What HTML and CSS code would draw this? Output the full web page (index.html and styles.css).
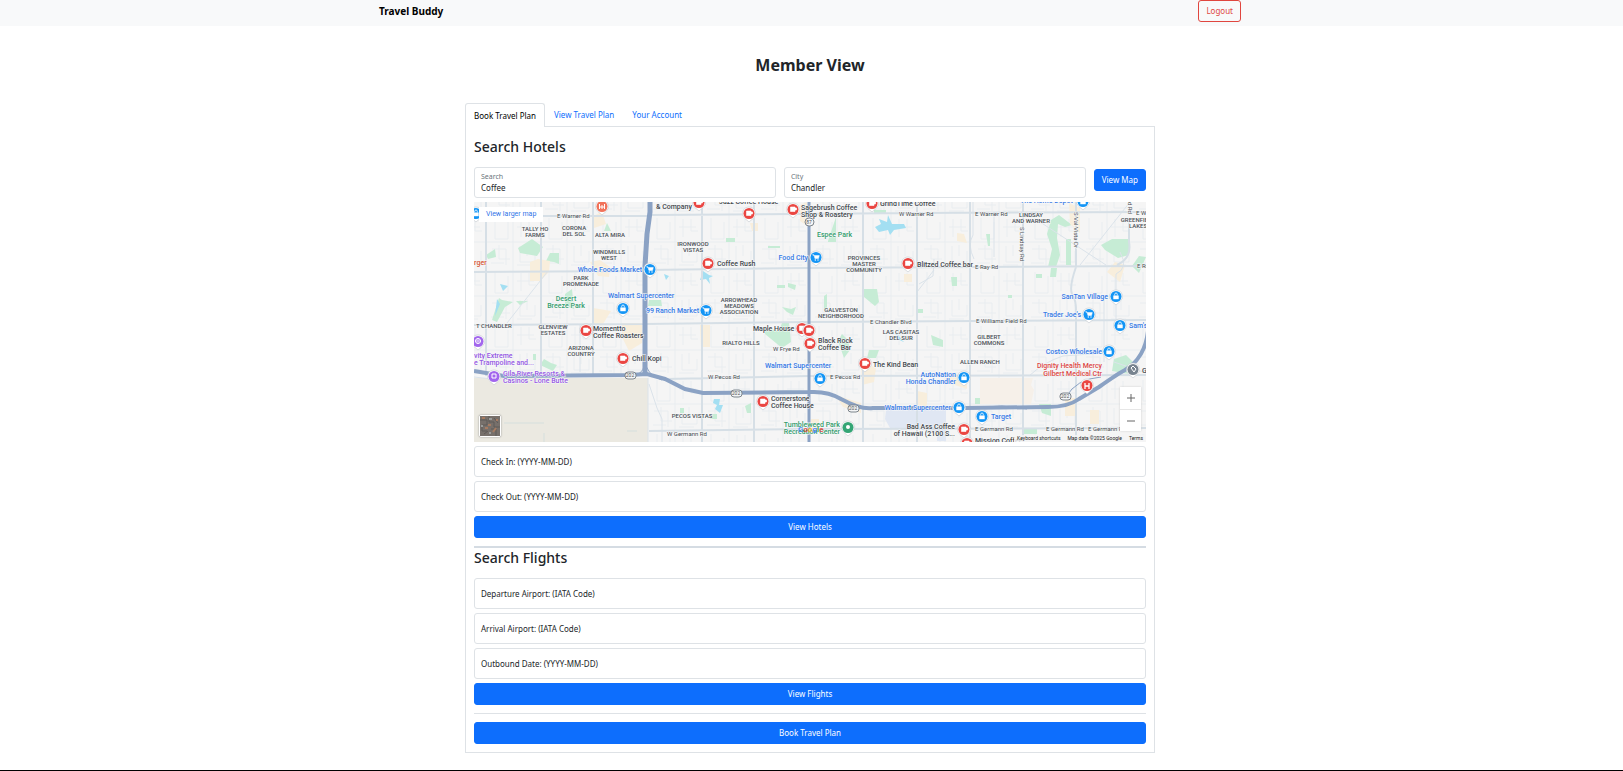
FILE: index.html
```html
<!DOCTYPE html>
<html lang="en">
<head>
<meta charset="utf-8">
<title>Travel Buddy</title>
<link rel="stylesheet" href="styles.css">
</head>
<body>
<nav class="navbar">
  <div class="navbar-inner">
    <a class="brand" href="#">Travel Buddy</a>
    <button class="btn btn-danger" type="button">Logout</button>
  </div>
</nav>
<main class="main">
  <h1 class="title">Member View</h1>
  <div class="tabs" role="tablist">
    <button class="tab tab-active" type="button" role="tab" aria-selected="true">Book Travel Plan</button>
    <button class="tab" type="button" role="tab" aria-selected="false">View Travel Plan</button>
    <button class="tab" type="button" role="tab" aria-selected="false">Your Account</button>
  </div>
  <section class="panel">
    <h2 class="heading">Search Hotels</h2>
    <form class="stack">
      <div class="search-row">
        <div class="field field-filled">
          <label for="search">Search</label>
          <input id="search" type="text" value="Coffee">
        </div>
        <div class="field field-filled">
          <label for="city">City</label>
          <input id="city" type="text" value="Chandler">
        </div>
        <button class="btn btn-primary" type="button">View Map</button>
      </div>
      <div class="map">
        <svg class="map-canvas" viewBox="0 0 672 240" preserveAspectRatio="xMidYMid slice" role="img" aria-label="Map of Chandler">
          <defs>
            <pattern id="streets" width="54" height="54" x="12" y="13" patternUnits="userSpaceOnUse">
              <path d="M27 0V54M0 27H54M9 3V24H22V7M35 4V22M43 4V16H50M31 12H48M6 34H20V50M13 30V44H24M34 31V47H49V36M41 30V41M5 48H18M31 50H46" fill="none" stroke="#e9edf0" stroke-width="1"/>
            </pattern>
            <symbol id="pin" viewBox="0 0 16 18" overflow="visible">
              <path d="M8 1a6.500 6.500 0 0 1 4 11.600L8 16l-4-3.400A6.500 6.500 0 0 1 8 1z" fill="#fff" stroke="#b9bec4" stroke-width=".5"/>
              <circle cx="8" cy="7.500" r="5.500" fill="currentColor"/>
            </symbol>
            <symbol id="cup" viewBox="0 0 16 18"><use href="#pin" width="16" height="18"/><path d="M5.500 5h4.500v4.500h-4.500zM10 6h1.500v2H10" fill="#fff" stroke="#fff" stroke-width=".6"/></symbol>
            <symbol id="cart" viewBox="0 0 16 18"><use href="#pin" width="16" height="18"/><path d="M4.500 4.800h1.400l1 3.700h3.600l.8-2.900H6.200z" fill="#fff" stroke="#fff" stroke-width=".5"/><circle cx="7.300" cy="10" r=".7" fill="#fff"/><circle cx="10" cy="10" r=".7" fill="#fff"/></symbol>
            <symbol id="bag" viewBox="0 0 16 18"><use href="#pin" width="16" height="18"/><path d="M5.300 6.500h5.400v3.700H5.300z" fill="#fff"/><path d="M6.700 6.500V5.300a1.300 1.300 0 0 1 2.600 0v1.200" fill="none" stroke="#fff" stroke-width=".8"/></symbol>
          </defs>
          <rect width="672" height="240" fill="#f5f5f5"/>
          <rect width="672" height="240" fill="url(#streets)"/>
          <path class="park" d="M44 46l14-9 11 8-6 9-17-3zM12 53l9-6 1 8-8 2zM76 51h9v11l-5-2-8-1zM18 118l7-22 3 2 11 2-8 5-8 15zM42 99h12l-8 4zM91 92l7-5 2 20-9-3zM133 21l4 8h-7zM354 39l8-24v25h-8zM390 87h13l2 13-4 4-11-9zM294 44h12v2h-12zM252 36h9v4h-9zM303 83h8v3h-8zM314 81l8 2-1 5-7-3zM350 94l3-2v15h-3zM308 105l9 2 5-2-3 8-6-3zM175 98h12l1 6h-14zM577 18l8-5 13 10-7 2-7-3-1 14 3 17-4 12h-8l4-18-5-15zM592 37h5v26h-5zM627 43l11-6h17v16l-11 3-13-8zM477 75h6v9h-5zM512 32h4v12h-2zM534 93h4v3h-4zM562 72h6v4h-6zM577 66h6l-1 9h-6zM66 163l4-6 7 4 6 2-4 6zM59 152h3v6h-3zM290 125l15 4 3-8h7l2 19-9 6-17-14zM364 139l4-7 6 6 2 10-6 8zM395 148h10l-3 8h-9zM236 212h7v5h-7zM271 204l6-3v10h-4zM206 206h4v5h-4zM640 157l12-4 8 8-5 11-17-3zM457 133l12 5v7l-10-2zM501 196h6v6h-6zM548 226h15v6h-13zM565 202h12v12l-9-3zM658 64l7-10 7 1-7 16zM400 8h12v4h-12zM443 107h6v4h-6zM372 219h3v8h-6z"/>
          <path class="built" d="M56 60l8-3 12 2-1 11-9 9H56zM116 60l10-2 10 7-1 10-11-1zM119 106l18 3-8 13H119zM119 14l9-4 4 12-12 4zM148 121h20v20l-13 8-7-14zM595 1l11 5v25l-10-9zM483 31l7 1 3 9-10-2zM430 72h8v8h-8zM276 21h8v8h-6zM326 3l7-3v24l-7-5zM361 193l26 8v10l-18-6zM475 174l18 1v12l-18-6zM443 189l10 2v14h-9zM591 196h11v18h-11zM616 208h9v14h-9zM387 159l15 7-2 14-12 3zM337 217h8v11h-8zM226 123h10v22h-9zM633 70l8-10 10 3-5 17z"/>
          <path d="M506 176h53l-2 7 3 5-3 14h-51z" fill="#f6f0e9"/>
          <path d="M0 176H174V240H0z" fill="#ebe9e1"/>
          <path d="M30 221h40M153 229h10M70 231v9" stroke="#d5dfdd"/>
          <path d="M412 208h60v31h-9v-10l-47-3-5-9z" fill="#e0e7f3"/>
          <path class="water" d="M26 82l8 2-5 5zM23 97l3 5-5 12zM401 25l6-3-2-5 8 3 1-7 4 9 12 0 2 4-12 2-4 5-2-5-9 2zM229 69l6 4 4 1-4 2 1 6-4-5-6 1zM421 130l4 4 5 6-5-2zM190 72l5 2-3 4zM240 197l6 0-1 6 4 0-3 8-5-4 2-4-4-2z"/>
          <path d="M33 121L74 69M563 18l69 45M606 63l50-63M443 90l17-22M0 175l18 2M106 122v48M174 176v64M175 182l8 24 5 11v23M520 10v45M640 160l32 11M555 174q15-14 34-20l40-3M646 50q9 16-4 22v48M630 98v62M445 82l14-8 1-17M500 57q-7-14-1-24V0" fill="none" stroke="#dbe3ea" stroke-width="1"/>
          <path class="road" d="M12 0v174M67 0v174M119 0v173M228 0v240M280 0v240M389 0v240M443 0v240M496 0v240M549 0v240M602 0v65q-7 20-4 27 5 6 4 25v123M655 20v20q3 16-12 23M0 14h176M0 70l171-1M0 123l171-1M176 13l267-2 229-1M171 68l160-2 341-2M171 122l164-2 337-2M192 177l143-3 337-1M175 229l160-2 337-1"/>
          <g class="highway"><path d="M335 0V240" stroke-width="3"/><path d="M176 0v10l-3 22-2 32V172" stroke-width="5"/><path d="M0 169l30 5 125-1 18-1 18 5 20 10 18 4 107-1q18-1 31 7 20 11 32 9h92l83-1q20 0 31-8l20-12q20-14 26-17 20-12 23-39V85q0-26 18-41" stroke-width="4"/><path d="M592 195q10-18 35-20M162 173q9-3 9-15 1 15 17 20M493 206l35-2 25 3" stroke-width="1"/></g>
          <g class="shield"><rect x="331" y="16" width="9" height="8" rx="4"/><rect x="151" y="170" width="11" height="7" rx="3"/><rect x="257" y="188" width="11" height="7" rx="3"/><rect x="374" y="203" width="11" height="7" rx="3"/><rect x="586" y="191" width="11" height="7" rx="3"/></g>
          <g class="shield-text"><text x="335" y="22">87</text><text x="156" y="175">202</text><text x="262" y="193">202</text><text x="379" y="208">202</text><text x="591" y="196">202</text></g>
          <g class="area">
            <text x="61" y="29">TALLY HO</text><text x="61" y="35">FARMS</text>
            <text x="100" y="28">CORONA</text><text x="100" y="34">DEL SOL</text>
            <text x="136" y="35">ALTA MIRA</text>
            <text x="135" y="52">WINDMILLS</text><text x="135" y="58">WEST</text>
            <text x="107" y="78">PARK</text><text x="107" y="84">PROMENADE</text>
            <text x="219" y="44">IRONWOOD</text><text x="219" y="50">VISTAS</text>
            <text x="390" y="58">PROVINCES</text><text x="390" y="64">MASTER</text><text x="390" y="70">COMMUNITY</text>
            <text x="265" y="100">ARROWHEAD</text><text x="265" y="106">MEADOWS</text><text x="265" y="112">ASSOCIATION</text>
            <text x="367" y="110">GALVESTON</text><text x="367" y="116">NEIGHBORHOOD</text>
            <text x="557" y="15">LINDSAY</text><text x="557" y="21">AND WARNER</text>
            <text x="664" y="20">GREENFIELD</text><text x="664" y="26">LAKES</text>
            <text x="20" y="126">T CHANDLER</text>
            <text x="79" y="127">GLENVIEW</text><text x="79" y="133">ESTATES</text>
            <text x="107" y="148">ARIZONA</text><text x="107" y="154">COUNTRY</text>
            <text x="267" y="143">RIALTO HILLS</text>
            <text x="427" y="132">LAS CASITAS</text><text x="427" y="138">DEL SUR</text>
            <text x="515" y="137">GILBERT</text><text x="515" y="143">COMMONS</text>
            <text x="506" y="162">ALLEN RANCH</text>
            <text x="218" y="216">PECOS VISTAS</text>
          </g>
          <g class="street">
            <text x="83" y="16">E Warner Rd</text><text x="425" y="14">W Warner Rd</text><text x="501" y="14">E Warner Rd</text><text x="662" y="13">E War</text>
            <text x="501" y="67">E Ray Rd</text><text x="663" y="66">E Ray</text><text x="396" y="122">E Chandler Blvd</text><text x="502" y="121">E Williams Field Rd</text>
            <text x="299" y="149">W Frye Rd</text><text x="234" y="177">W Pecos Rd</text><text x="356" y="177">E Pecos Rd</text>
            <text x="193" y="234">W Germann Rd</text><text x="501" y="229">E Germann Rd</text><text x="572" y="229">E Germann Rd</text><text x="614" y="229">E Germann Rd</text>
            <text transform="translate(546 25) rotate(90)">S Lindsay Rd</text><text transform="translate(600 10) rotate(90)">S Val Vista Dr</text><text transform="translate(654 0) rotate(90)">d Rd</text>
          </g>
          <g class="poi">
            <text x="182" y="7">&amp; Company</text><text x="245" y="2">Jazz Coffee House</text>
            <text x="327" y="8">Sagebrush Coffee</text><text x="327" y="15">Shop &amp; Roastery</text>
            <text x="406" y="4">GrindTime Coffee</text><text x="243" y="64">Coffee Rush</text><text x="443" y="65">Blitzed Coffee bar</text>
            <text x="119" y="129">Momentto</text><text x="119" y="136">Coffee Roasters</text><text x="158" y="159">Chill Kopi</text>
            <text x="279" y="129">Maple House</text><text x="344" y="141">Black Rock</text><text x="344" y="148">Coffee Bar</text>
            <text x="399" y="165">The Kind Bean</text><text x="297" y="199">Cornerstone</text><text x="297" y="206">Coffee House</text>
            <text class="end" x="481" y="227">Bad Ass Coffee</text><text class="end" x="481" y="234">of Hawaii (2100 S...</text><text x="501" y="241">Mission Coffee</text><text x="668" y="171">Gilbert</text>
          </g>
          <g class="poi shop">
            <text class="end" x="168" y="70">Whole Foods Market</text><text x="134" y="96">Walmart Supercenter</text><text class="end" x="225" y="111">99 Ranch Market</text>
            <text class="end" x="334" y="58">Food City</text><text x="546" y="1">The Home Depot</text><text class="end" x="634" y="97">SanTan Village</text><text class="end" x="607" y="115">Trader Joe's</text>
            <text x="655" y="126">Sam's Club</text><text class="end" x="628" y="152">Costco Wholesale</text><text x="291" y="166">Walmart Supercenter</text>
            <text class="end" x="482" y="175">AutoNation</text><text class="end" x="482" y="182">Honda Chandler</text><text class="end" x="477" y="208">Walmart Supercenter</text><text x="517" y="217">Target</text>
          </g>
          <g class="poi nature">
            <text x="92" y="99" text-anchor="middle">Desert</text><text x="92" y="106" text-anchor="middle">Breeze Park</text><text x="343" y="35">Espee Park</text>
            <text class="end" x="366" y="225">Tumbleweed Park</text><text class="end" x="366" y="232">Recreation Center</text>
          </g>
          <g class="poi fun"><text x="0" y="156">vity Extreme</text><text x="0" y="163">e Trampoline and...</text><text x="29" y="174">Gila River Resorts &amp;</text><text x="29" y="181">Casinos - Lone Butte</text></g>
          <g class="poi health"><text class="end" x="628" y="166">Dignity Health Mercy</text><text class="end" x="628" y="174">Gilbert Medical Ctr</text></g>
          <text class="poi burger" x="0" y="63">rger</text>
          <g class="pin-red">
            <use href="#cup" x="217" y="-7" width="16" height="18"/><use href="#cup" x="267" y="4" width="16" height="18"/><use href="#cup" x="311" y="0" width="16" height="18"/><use href="#cup" x="390" y="-6" width="16" height="18"/>
            <use href="#cup" x="226" y="54" width="16" height="18"/><use href="#cup" x="426" y="54" width="16" height="18"/><use href="#cup" x="320" y="119" width="16" height="18"/><use href="#cup" x="327" y="121" width="16" height="18"/>
            <use href="#cup" x="328" y="134" width="16" height="18"/><use href="#cup" x="383" y="154" width="16" height="18"/><use href="#cup" x="281" y="192" width="16" height="18"/><use href="#cup" x="104" y="121" width="16" height="18"/>
            <use href="#cup" x="141" y="149" width="16" height="18"/><use href="#cup" x="482" y="220" width="16" height="18"/><use href="#cup" x="485" y="234" width="16" height="18"/>
            <use href="#pin" x="605" y="176" width="16" height="18"/><path d="M611 181v6M615 181v6M611 184h4" stroke="#fff" stroke-width="1.300"/>
          </g>
          <g class="pin-orange"><use href="#pin" x="120" y="-3" width="16" height="18"/><path d="M125.500 2v5M128 3v4M130.500 2v5M125.500 5h5" stroke="#fff" stroke-width="1"/></g>
          <g class="pin-blue">
            <use href="#cart" x="168" y="60" width="16" height="18"/><use href="#cart" x="224" y="101" width="16" height="18"/><use href="#cart" x="334" y="48" width="16" height="18"/><use href="#cart" x="607" y="105" width="16" height="18"/>
            <use href="#bag" x="141" y="99" width="16" height="18"/><use href="#bag" x="338" y="169" width="16" height="18"/><use href="#bag" x="601" y="-8" width="16" height="18"/><use href="#bag" x="634" y="87" width="16" height="18"/>
            <use href="#bag" x="638" y="116" width="16" height="18"/><use href="#bag" x="627" y="142" width="16" height="18"/><use href="#bag" x="482" y="168" width="16" height="18"/><use href="#bag" x="477" y="198" width="16" height="18"/>
            <use href="#bag" x="500" y="207" width="16" height="18"/><use href="#bag" x="-6" y="4" width="16" height="18"/>
          </g>
          <g class="pin-green"><use href="#pin" x="366" y="218" width="16" height="18"/><circle cx="374" cy="225" r="2" fill="#fff"/></g>
          <g class="pin-purple"><use href="#pin" x="-4" y="132" width="16" height="18"/><circle cx="4" cy="139" r="2.500" fill="none" stroke="#fff"/><path d="M4 136v6M1 139h6" stroke="#fff" stroke-width=".6"/><use href="#pin" x="12" y="167" width="16" height="18"/><path d="M18 172h4v4h-4z" fill="none" stroke="#fff"/></g>
          <g class="pin-grey"><use href="#pin" x="651" y="160" width="16" height="18"/><path d="M657 166l2-2 3 3-2 3z" fill="none" stroke="#fff" stroke-width="1"/></g>
          <text class="google" x="324" y="230"><tspan fill="#4285f4">G</tspan><tspan fill="#ea4335">o</tspan><tspan fill="#fbbc05">o</tspan><tspan fill="#4285f4">g</tspan><tspan fill="#34a853">l</tspan><tspan fill="#ea4335">e</tspan></text>
        </svg>
        <a class="map-link" href="#">View larger map</a>
        <button class="map-layer" type="button" aria-label="Show satellite imagery">
          <svg viewBox="0 0 20 20" aria-hidden="true"><path d="M0 0h20v20H0z" fill="#77706b"/><path d="M0 4h7v5H2v6h5M9 0v6h5v5h6M11 13h5v7M4 18l4-3M14 2l4 5" fill="none" stroke="#5f5a58" stroke-width="1"/><path d="M8 9h3M2 2h3M13 16l3-4M5 12h3M16 4h2" stroke="#a77b61" stroke-width="2"/><path d="M9 3h3M1 10h2M9 17h2" stroke="#9a9c9b" stroke-width="2"/></svg>
        </button>
        <div class="map-zoom">
          <button type="button" aria-label="Zoom in"><svg viewBox="0 0 10 10" aria-hidden="true"><path d="M1 5h8M5 1v8"/></svg></button>
          <button type="button" aria-label="Zoom out"><svg viewBox="0 0 10 10" aria-hidden="true"><path d="M1 5h8"/></svg></button>
        </div>
        <div class="map-credits"><span>Keyboard shortcuts</span><span>Map data ©2025 Google</span><span>Terms</span></div>
      </div>
      <div class="field"><label for="checkin">Check In: (YYYY-MM-DD)</label><input id="checkin" type="text"></div>
      <div class="field"><label for="checkout">Check Out: (YYYY-MM-DD)</label><input id="checkout" type="text"></div>
      <button class="btn btn-primary" type="button">View Hotels</button>
    </form>
    <hr class="rule rule-thick">
    <h2 class="heading">Search Flights</h2>
    <form class="stack">
      <div class="field"><label for="departure">Departure Airport: (IATA Code)</label><input id="departure" type="text"></div>
      <div class="field"><label for="arrival">Arrival Airport: (IATA Code)</label><input id="arrival" type="text"></div>
      <div class="field"><label for="outbound">Outbound Date: (YYYY-MM-DD)</label><input id="outbound" type="text"></div>
      <button class="btn btn-primary" type="button">View Flights</button>
    </form>
    <hr class="rule">
    <button class="btn btn-primary btn-block" type="button">Book Travel Plan</button>
  </section>
</main>
</body>
</html>
```

FILE: styles.css
```css
* { box-sizing: border-box; }

body {
  margin: 0;
  min-height: 100vh;
  padding-right: 3px;
  border-bottom: 1px solid #000;
  background: #fff;
  color: #212529;
  font: 8px/12px "Segoe UI", "Noto Sans", "Open Sans", sans-serif;
}

button, input { font: inherit; color: inherit; }

.navbar { margin-right: -3px; padding: 0 3px 4px 0; background: #f8f9fa; }

.navbar-inner {
  display: flex;
  align-items: center;
  justify-content: space-between;
  max-width: 862px;
  margin: 0 auto;
}

.brand { color: #000; font-size: 10px; font-weight: 700; text-decoration: none; }

.btn { padding: 4px 7px; border: 1px solid; border-radius: 3px; }
.btn-danger { border-color: #e0463f; background: transparent; color: #e0463f; }
.btn-primary { border-color: #0d6efd; background: #0d6efd; color: #fff; }
.btn-block { width: 100%; }

.main { max-width: 690px; margin: 0 auto; padding-bottom: 8px; }

.title { margin: 28px 0 26px; font-size: 16px; line-height: 23px; font-weight: 700; text-align: center; }

.tabs { display: flex; }
.tab { padding: 5px 8px; border: 1px solid transparent; border-bottom: 0; border-radius: 3px 3px 0 0; background: none; color: #0d6efd; }
.tab-active { position: relative; margin-bottom: -1px; border-color: #dee2e6; background: #fff; color: #000; }

.panel { padding: 8px; border: 1px solid #dee2e6; }

.heading { margin: 0 0 8px; padding: 2px 0; font-size: 14px; line-height: 20px; font-weight: 500; }

.stack { display: flex; flex-direction: column; gap: 4px; }
.search-row { display: flex; align-items: flex-start; gap: 8px; }
.search-row .btn { margin-top: 2px; }

.field {
  display: flex;
  flex: 1;
  align-items: center;
  min-width: 0;
  min-height: 31px;
  padding: 0 6px;
  border: 1px solid #dee2e6;
  border-radius: 3px;
}
.field input { flex: 1; min-width: 0; padding: 0; border: 0; outline: 0; background: none; }
.field-filled { flex-direction: column; align-items: stretch; justify-content: center; }
.field-filled label { color: #6c757d; font-size: 7px; line-height: 10px; }
.field-filled input { flex: none; line-height: 12px; }

.rule { margin: 8px 0; border: 0; border-top: 1px solid #dee2e6; }
.rule-thick { margin-bottom: 0; border-top: 2px solid #d5dce3; }
.rule-thick + .heading { padding-top: 0; }

.map { position: relative; overflow: hidden; font-family: Roboto, sans-serif; }
.map-canvas { display: block; width: 100%; height: 240px; font-family: Roboto, sans-serif; }
.park { fill: #c6ecd5; }
.built { fill: #f8eedc; }
.water { fill: #a3dff2; }
.road { fill: none; stroke: #d6dfe6; stroke-width: 2; }
.highway { fill: none; stroke: #8ba2c4; }
.shield { fill: #f4f5f6; stroke: #7d858c; stroke-width: 1; }
.shield-text { font-size: 5px; text-anchor: middle; fill: #555; }
.area, .street, .poi { paint-order: stroke; stroke: #f8f9fa; stroke-width: 1px; }
.area { font-size: 6px; font-weight: 500; text-anchor: middle; fill: #4b5055; }
.street { font-size: 6px; fill: #454a4f; }
.poi { font-size: 7px; font-weight: 500; fill: #43484d; }
.shop { fill: #3578e5; }
.nature { fill: #339c6c; }
.fun { fill: #9557e3; }
.health { fill: #dc4643; }
.burger { fill: #d65632; }
.end { text-anchor: end; }
.google { font-size: 8px; font-weight: 500; }
.pin-red { color: #ea4642; }
.pin-orange { color: #f1735b; }
.pin-blue { color: #1495f5; }
.pin-green { color: #34a575; }
.pin-purple { color: #a266ed; }
.pin-grey { color: #77838f; }

.map-link { position: absolute; top: 5px; left: 5px; padding: 2px 7px; background: #fff; color: #2f75e8; font-size: 7px; line-height: 11px; text-decoration: none; }
.map-layer { position: absolute; bottom: 5px; left: 5px; width: 22px; height: 22px; padding: 0; border: 1px solid #fff; border-radius: 2px; box-shadow: 0 0 2px #888; }
.map-layer svg { display: block; width: 100%; height: 100%; }
.map-zoom { position: absolute; right: 5px; bottom: 11px; display: grid; width: 21px; background: #fff; box-shadow: 0 0 2px #ccc; }
.map-zoom button { display: grid; place-items: center; height: 22px; padding: 0; border: 0; background: none; }
.map-zoom button + button { border-top: 1px solid #e6e6e6; }
.map-zoom svg { width: 10px; height: 10px; stroke: #666; stroke-width: 1; }
.map-credits { position: absolute; right: 0; bottom: 0; display: flex; gap: 7px; padding: 0 3px; background: #f5f5f5cc; color: #222; font-size: 5px; line-height: 7px; }
```
